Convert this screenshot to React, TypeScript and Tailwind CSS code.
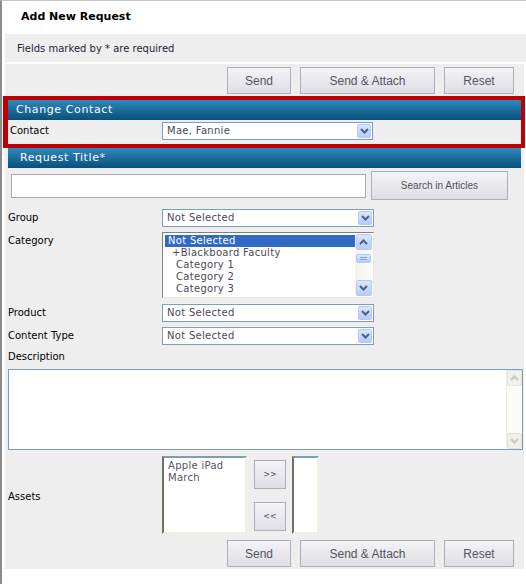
import React from "react";

const Chevron = ({ up = false, color = "#4d6185" }: { up?: boolean; color?: string }) => (
  <svg width="9" height="6" viewBox="0 0 9 6" className={up ? "rotate-180" : ""}>
    <path d="M1 1 L4.5 4.5 L8 1" fill="none" stroke={color} strokeWidth="2" />
  </svg>
);

const ArrowBox = ({ up = false }: { up?: boolean }) => (
  <div className="w-[16px] h-[16px] flex items-center justify-center rounded-[2px] border border-[#b7c9f3] bg-gradient-to-b from-[#dbe6fd] to-[#b6cbf8]">
    <Chevron up={up} />
  </div>
);

const Select = ({ value, w = "w-[212px]" }: { value: string; w?: string }) => (
  <div className={`${w} h-[18px] bg-white border border-[#7f9db9] flex items-center justify-between`}>
    <span className="pl-[4px] text-[10px] tracking-[0.3px] text-[#4a4a5a] leading-none">{value}</span>
    <div className="mr-[1px]">
      <div className="w-[14px] h-[14px] flex items-center justify-center rounded-[2px] border border-[#b7c9f3] bg-gradient-to-b from-[#dbe6fd] to-[#b6cbf8]">
        <Chevron />
      </div>
    </div>
  </div>
);

const Button = ({ label, w }: { label: string; w: string }) => (
  <button
    className={`${w} h-[27px] border border-[#aeaeb8] bg-gradient-to-b from-[#f4f4f7] to-[#dedee4] text-[12px] text-[#55555f] font-['Liberation_Sans',Arial,sans-serif]`}
  >
    {label}
  </button>
);

const BlueBar = ({ label, pl }: { label: string; pl: string }) => (
  <div
    className={`h-[20px] ${pl} flex items-center bg-gradient-to-b from-[#2d8bbd] to-[#0a4f7b] text-white text-[11px] tracking-[0.6px]`}
  >
    {label}
  </div>
);

const ButtonRow = () => (
  <div className="flex justify-end gap-[9px] pr-[10px]">
    <Button label="Send" w="w-[64px]" />
    <Button label="Send & Attach" w="w-[135px]" />
    <Button label="Reset" w="w-[70px]" />
  </div>
);

const Row = ({ label, children, mt }: { label: string; children: React.ReactNode; mt: string }) => (
  <div className={`flex items-start ${mt}`}>
    <div className="w-[157px] pl-[3px] pt-[1px] text-[10px] leading-[15px] text-black">{label}</div>
    {children}
  </div>
);

const categories = [
  { name: "+Blackboard Faculty", pl: "pl-[7px]" },
  { name: "Category 1", pl: "pl-[11px]" },
  { name: "Category 2", pl: "pl-[11px]" },
  { name: "Category 3", pl: "pl-[11px]" },
];

export default function App() {
  return (
    <div className="w-[526px] h-[584px] bg-white border-l-2 border-l-[#8c8c8c] border-t border-t-[#c9c9c9] font-['DejaVu_Sans',Verdana,sans-serif] overflow-hidden">
      <div className="h-[33px] pl-[19px] flex items-center text-[11px] font-bold text-black">Add New Request</div>
      <div className="ml-[3px] h-[28px] pl-[12px] flex items-center bg-[#eeeeee] text-[10px] text-[#1e1e36]">
        Fields marked by * are required
      </div>
      <div className="ml-[3px] mr-[2px] mt-[2px] h-[505px] bg-[#eeeeee] pt-[3px]">
        <ButtonRow />

        <div className="mt-[2px] -ml-[2px] -mr-[1px] border-[4px] border-l-[5px] border-[#c00000]">
          <BlueBar label="Change Contact" pl="pl-[8px]" />
          <div className="h-[24px] flex items-start pt-[2px]">
            <div className="w-[154px] pl-[2px] pt-[1px] text-[10px] leading-[15px] text-black">Contact</div>
            <Select value="Mae, Fannie" w="w-[211px]" />
          </div>
        </div>

        <div className="ml-[3px] mr-[3px]">
          <BlueBar label="Request Title*" pl="pl-[12px]" />
        </div>

        <div className="flex items-start mt-[3px]">
          <div className="ml-[6px] mt-[3px] w-[355px] h-[24px] bg-white border border-[#a9a9b6]" />
          <button className="ml-[5px] w-[137px] h-[29px] border border-[#aeaeb8] bg-gradient-to-b from-[#f4f4f7] to-[#dedee4] text-[10px] text-[#50505c] font-['Liberation_Sans',Arial,sans-serif]">
            Search in Articles
          </button>
        </div>

        <Row label="Group" mt="mt-[9px]">
          <Select value="Not Selected" />
        </Row>

        <Row label="Category" mt="mt-[5px]">
          <div className="w-[212px] h-[66px] bg-white border border-t-[#808080] border-l-[#808080] border-r-[#ece9d8] border-b-[#ece9d8] flex">
            <div className="flex-1 pt-[2px] pl-[2px] text-[10px] leading-[12px] text-[#4a4a5a] tracking-[0.3px]">
              <div className="bg-[#316ac5] text-white pl-[3px]">Not Selected</div>
              {categories.map((c) => (
                <div key={c.name} className={c.pl}>
                  {c.name}
                </div>
              ))}
            </div>
            <div className="w-[17px] mt-[1px] mb-[1px] mr-[1px] flex flex-col items-center justify-between bg-gradient-to-r from-[#f3f2ea] to-[#fdfdfa]">
              <ArrowBox up />
              <div className="w-[15px] h-[9px] -mt-[14px] rounded-[2px] border border-[#b7c9f3] bg-gradient-to-b from-[#dbe6fd] to-[#b6cbf8] flex flex-col justify-center items-center gap-[1px]">
                <div className="w-[7px] h-[1px] bg-[#8aa4e0]" />
                <div className="w-[7px] h-[1px] bg-[#8aa4e0]" />
              </div>
              <ArrowBox />
            </div>
          </div>
        </Row>

        <Row label="Product" mt="mt-[6px]">
          <Select value="Not Selected" />
        </Row>

        <Row label="Content Type" mt="mt-[5px]">
          <Select value="Not Selected" />
        </Row>

        <div className="mt-[4px] pl-[3px] text-[10px] leading-[15px] text-black">Description</div>

        <div className="mt-[5px] ml-[3px] mr-[1px] h-[81px] bg-white border border-[#7f9db9] flex justify-end">
          <div className="w-[16px] flex flex-col justify-between bg-[#fbfbf8] border-l border-[#ecebe4]">
            <div className="h-[16px] flex items-center justify-center bg-[#f1f0ea] border border-[#e4e3dc] rounded-[2px]">
              <Chevron up color="#c9c8c0" />
            </div>
            <div className="h-[16px] flex items-center justify-center bg-[#f1f0ea] border border-[#e4e3dc] rounded-[2px]">
              <Chevron color="#c9c8c0" />
            </div>
          </div>
        </div>

        <div className="flex items-start mt-[6px]">
          <div className="w-[157px] pl-[3px] pt-[33px] text-[10px] leading-[15px] text-black">Assets</div>
          <div className="w-[85px] h-[78px] bg-white border-2 border-t-[#7f9db9] border-l-[#716f64] border-r-[#f1efe2] border-b-[#f1efe2] pl-[4px] pt-[2px] text-[10px] leading-[12px] text-[#555566] tracking-[0.3px]">
            <div>Apple iPad</div>
            <div>March</div>
          </div>
          <div className="ml-[7px] mt-[4px] flex flex-col gap-[13px]">
            <button className="w-[32px] h-[29px] border border-[#aeaeb8] bg-gradient-to-b from-[#f4f4f7] to-[#dedee4] text-[8px] text-[#50505c]">
              &gt;&gt;
            </button>
            <button className="w-[32px] h-[29px] border border-[#aeaeb8] bg-gradient-to-b from-[#f4f4f7] to-[#dedee4] text-[8px] text-[#50505c]">
              &lt;&lt;
            </button>
          </div>
          <div className="ml-[6px] w-[27px] h-[78px] bg-white border-2 border-t-[#7f9db9] border-l-[#716f64] border-r-[#f1efe2] border-b-[#f1efe2]" />
        </div>

        <div className="mt-[6px]">
          <ButtonRow />
        </div>
      </div>
    </div>
  );
}
